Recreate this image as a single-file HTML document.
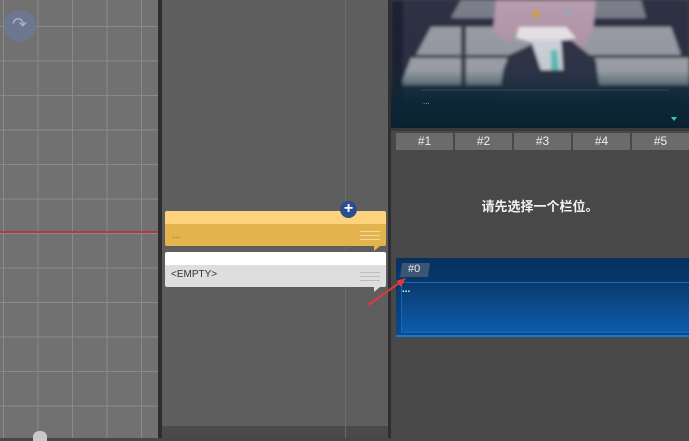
<!DOCTYPE html>
<html><head><meta charset="utf-8"><style>
*{margin:0;padding:0;box-sizing:border-box}
body{width:689px;height:438px;overflow:hidden;background:#484848;position:relative;font-family:"Liberation Sans","Noto Sans CJK SC",sans-serif}
.a{position:absolute}
#left{left:0;top:0;width:159px;height:438px;background-color:#717171;
background-image:linear-gradient(90deg,#8a8a8a 1px,transparent 1px),linear-gradient(#8a8a8a 1px,transparent 1px);
background-size:34.5px 34.5px;background-position:3px 26px}
.tab{position:absolute;top:133px;height:17px;width:57px;background:#6b6b6b;color:#eee;font-size:12px;text-align:center;line-height:17px}
</style></head><body>
<div class="a" id="left"></div>
<div class="a" style="left:0;top:231px;width:159px;height:2px;background:#b33a3a"></div>
<div class="a" style="left:4px;top:10px;width:32px;height:32px;border-radius:50%;background:#6d7890"></div>
<div class="a" style="left:12px;top:14px;color:#a9b2c6;font-size:18px">↷</div>
<div class="a" style="left:33px;top:431px;width:14px;height:10px;background:#c8c8c8;border-radius:6px 6px 0 0"></div>
<div class="a" style="left:158px;top:0;width:4px;height:438px;background:#2d2d2d"></div>
<div class="a" style="left:162px;top:0;width:226px;height:426px;background:#5e5e5e"></div>
<div class="a" style="left:162px;top:426px;width:226px;height:12px;background:#4a4a4a"></div>
<div class="a" style="left:345px;top:0;width:1px;height:438px;background:#5f7361"></div>
<div class="a" style="left:388px;top:0;width:3px;height:438px;background:#2e2e2e"></div>
<div class="a" style="left:165px;top:211px;width:221px;height:13px;background:#fdd47d;border-radius:2px 2px 0 0"></div>
<div class="a" style="left:165px;top:224px;width:221px;height:22px;background:#e3b34d;border-radius:0 0 2px 2px"></div>
<div class="a" style="left:172px;top:230px;color:#8a6a30;font-size:10px">...</div>
<div class="a" style="left:360px;top:231px;width:20px;height:9px;border-top:1px solid #f2d9a0;border-bottom:1px solid #f2d9a0"><div style="margin-top:3px;border-top:1px solid #f2d9a0"></div></div>
<div class="a" style="left:374px;top:246px;width:0;height:0;border-left:6px solid #e3b34d;border-bottom:5px solid transparent"></div>
<div class="a" style="left:340px;top:201px;width:17px;height:17px;border-radius:50%;background:#2c4d90;color:#fff;font-size:16px;font-weight:bold;text-align:center;line-height:16px">+</div>
<div class="a" style="left:165px;top:252px;width:221px;height:13px;background:#fff;border-radius:2px 2px 0 0"></div>
<div class="a" style="left:165px;top:265px;width:221px;height:22px;background:#dedede;border-radius:0 0 2px 2px"></div>
<div class="a" style="left:171px;top:269px;color:#333;font-size:10px">&lt;EMPTY&gt;</div>
<div class="a" style="left:360px;top:272px;width:20px;height:9px;border-top:1px solid #bdbdbd;border-bottom:1px solid #bdbdbd"><div style="margin-top:3px;border-top:1px solid #bdbdbd"></div></div>
<div class="a" style="left:374px;top:287px;width:0;height:0;border-left:6px solid #dedede;border-bottom:5px solid transparent"></div>
<svg class="a" style="left:391px;top:0" width="298" height="128" viewBox="0 0 298 128">
<defs><linearGradient id="g" x1="0" y1="0" x2="0" y2="1"><stop offset="0" stop-color="#000" stop-opacity="0"/><stop offset="0.55" stop-color="#0c2a3a" stop-opacity="0.1"/><stop offset="0.7" stop-color="#0b2736" stop-opacity="0.6"/><stop offset="0.8" stop-color="#0b2736" stop-opacity="0.95"/><stop offset="1" stop-color="#0a2230"/></linearGradient>
<filter id="b"><feGaussianBlur stdDeviation="1.5"/></filter></defs>
<g filter="url(#b)">
<rect width="298" height="128" fill="#2f3344"/>
<polygon points="70,0 250,0 255,18 60,18" fill="#7d808c"/>
<polygon points="40,27 280,27 290,55 25,55" fill="#9fa1a9"/>
<polygon points="20,58 298,58 298,85 10,85" fill="#a6a8af"/>
<rect x="70" y="25" width="5" height="60" fill="#3a3d4a" transform="skew(-20)"/>
<rect x="0" y="0" width="12" height="128" fill="#1c2030"/>
<path d="M105,0 L205,0 L202,30 L192,48 L178,42 L165,28 L130,28 L118,44 L102,32Z" fill="#b89caf"/>
<path d="M128,27 L175,27 L185,38 L165,42 L140,42 L125,38Z" fill="#efe9ec"/>
<circle cx="145" cy="14" r="4" fill="#c9a23c"/>
<circle cx="178" cy="12" r="3" fill="#7fb0c0"/>
<path d="M118,55 L150,40 L180,40 L205,60 L210,100 L108,100 L112,70Z" fill="#30364a"/>
<path d="M140,40 L170,40 L172,70 L150,70Z" fill="#d8dbe2"/>
<path d="M160,50 L166,50 L168,70 L160,70Z" fill="#5fc6c0"/>
</g>
<rect width="298" height="128" fill="url(#g)"/>
<line x1="30" y1="90" x2="278" y2="90" stroke="#2d4a5a" stroke-width="1"/>
<text x="32" y="104" fill="#bbb" font-size="8" font-family="Liberation Sans">...</text>
<polygon points="280,117 286,117 283,121" fill="#3cc"/>
</svg>
<div class="a" style="left:391px;top:128px;width:298px;height:3px;background:#3a3a3a"></div>
<div class="tab" style="left:396px">#1</div>
<div class="tab" style="left:455px">#2</div>
<div class="tab" style="left:514px">#3</div>
<div class="tab" style="left:573px">#4</div>
<div class="tab" style="left:632px">#5</div>
<div class="a" style="left:391px;top:196px;width:298px;text-align:center;color:#f2f2f2;font-size:13px;font-weight:bold">请先选择一个栏位。</div>
<div class="a" style="left:396px;top:258px;width:293px;height:79px;background:linear-gradient(#06305e,#0a4a8c);border-bottom:2px solid #1a78d0"></div>
<div class="a" style="left:401px;top:282px;width:294px;height:51px;background:linear-gradient(#0a3a6c,#0d5cae);border:1px solid #1868b8"></div>
<div class="a" style="left:401px;top:263px;width:28px;height:14px;background:#3a5670;transform:skew(-8deg)"></div>
<div class="a" style="left:408px;top:263px;color:#e8eef5;font-size:11px">#0</div>
<div class="a" style="left:402px;top:284px;color:#cfe;font-size:10px;font-weight:bold">...</div>
<svg class="a" style="left:360px;top:272px" width="50" height="40"><line x1="8" y1="33" x2="42" y2="9" stroke="#e03a35" stroke-width="2"/><polygon points="46,6 36,9 41,15" fill="#e03a35"/></svg>
</body></html>
